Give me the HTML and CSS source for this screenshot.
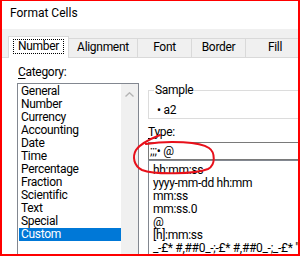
FILE: index.html
```html
<!DOCTYPE html>
<html lang="en">
<head>
  <meta charset="UTF-8" />
  <title>Format Cells</title>
  <link rel="stylesheet" href="styles.css">
</head>
<body>
  <div class="window">
    <div class="titlebar">Format Cells</div>

    <div class="tabs">
      <div class="tab active"><span class="focus">Number</span></div>
      <div class="tab tab-align">Alignment</div>
      <div class="tab tab-font">Font</div>
      <div class="tab tab-border">Border</div>
      <div class="tab tab-fill">Fill</div>
    </div>

    <div class="page">
      <div class="left">
        <div class="label"><u>C</u>ategory:</div>
        <div class="listbox">
          <ul class="items">
            <li>General</li>
            <li>Number</li>
            <li>Currency</li>
            <li>Accounting</li>
            <li>Date</li>
            <li>Time</li>
            <li>Percentage</li>
            <li>Fraction</li>
            <li>Scientific</li>
            <li>Text</li>
            <li>Special</li>
            <li class="selected">Custom</li>
          </ul>
          <div class="scrollbar">
            <svg width="9" height="5" viewBox="0 0 9 5">
              <polyline points="0.5,4.5 4.5,0.8 8.5,4.5" fill="none" stroke="#b4b4b4" stroke-width="1.4"/>
            </svg>
          </div>
        </div>
      </div>

      <div class="right">
        <fieldset class="sample">
          <legend>Sample</legend>
          <div class="sample-value">• a2</div>
        </fieldset>
        <div class="label type-label"><u>T</u>ype:</div>
        <div class="type-input">;;;• @</div>
        <ul class="type-list">
          <li>hh:mm:ss</li>
          <li>yyyy-mm-dd hh:mm</li>
          <li>mm:ss</li>
          <li>mm:ss.0</li>
          <li>@</li>
          <li>[h]:mm:ss</li>
          <li>_-£* #,##0_-;-£* #,##0_-;_-£* "-"_-;_-@_-</li>
        </ul>
      </div>
    </div>

    <svg class="annotation" width="300" height="256" viewBox="0 0 300 256">
      <path d="M160,135 C150,139 140,144 136,150 C132,157 134,166 142,170 C155,175 195,174 208,169 C216,165 215,152 209,148 C200,142 170,140 146,144"
            fill="none" stroke="#e8101a" stroke-width="2" stroke-linecap="round"/>
    </svg>
  </div>
</body>
</html>
```

FILE: styles.css
```css
body {
  margin: 0;
  font-family: Roboto, "Noto Sans", sans-serif;
  font-size: 12px;
  letter-spacing: -0.3px;
  color: #000;
  background-color: #ffffff;
}

.window {
  position: relative;
  width: 300px;
  height: 256px;
  box-sizing: border-box;
  border-style: solid;
  border-color: #ff0000;
  border-width: 1px 2px 2px 2px;
  background-color: #f0f0f0;
  overflow: hidden;
}

.titlebar {
  height: 28px;
  box-sizing: border-box;
  padding-left: 8px;
  line-height: 25px;
  letter-spacing: 0;
  background-color: #ffffff;
}

.tabs {
  display: flex;
  align-items: flex-end;
  height: 28px;
  box-sizing: border-box;
  padding-left: 6px;
}
.tab {
  flex: none;
  height: 19px;
  box-sizing: border-box;
  padding-top: 1px;
  margin-left: -1px;
  border: 1px solid #d9d9d9;
  border-bottom: none;
  background-color: #f0f0f0;
  text-align: center;
  line-height: 15px;
  white-space: nowrap;
}
.tab.active {
  position: relative;
  z-index: 1;
  width: 61px;
  height: 22px;
  margin-left: 0;
  margin-bottom: -1px;
  padding-top: 2px;
  background-color: #ffffff;
}
.tab-align { width: 70px; }
.tab-font { width: 55px; }
.tab-border { width: 55px; }
.tab-fill { width: 60px; }

.focus {
  display: inline-block;
  padding: 0 4px;
  border: 1px dotted #000;
  line-height: 13px;
}

.page {
  display: grid;
  grid-template-columns: 122px 170px;
  column-gap: 9px;
  align-items: start;
  height: 220px;
  padding: 7px 0 0 15px;
  border-top: 1px solid #d9d9d9;
  background-color: #ffffff;
}

.label {
  line-height: 15px;
  margin-left: 1px;
}
.label u {
  text-decoration-thickness: 1px;
  text-underline-offset: 2px;
}

.listbox {
  display: flex;
  height: 180px;
  margin-top: 3px;
  border: 1px solid #828790;
}
.items {
  width: 103px;
  box-sizing: border-box;
  margin: 0;
  padding: 1px 0 0 1px;
  list-style: none;
}
.items li {
  height: 13px;
  padding-left: 2px;
  line-height: 13px;
  white-space: nowrap;
}
.items li.selected {
  background-color: #0078d7;
  color: #ffffff;
}
.scrollbar {
  width: 17px;
  background-color: #f0f0f0;
  text-align: center;
}
.scrollbar svg {
  display: block;
  margin: 8px auto 0 auto;
}

.sample {
  min-width: 0;
  margin: 18px 0 0 0;
  padding: 0 0 0 5px;
  border: 1px solid #dcdcdc;
}
.sample legend {
  padding: 0 1px;
  line-height: 15px;
}
.sample-value {
  margin-left: 3px;
  padding-top: 5px;
  line-height: 15px;
}

.type-label {
  margin: 6px 0 0 0;
}

.type-input {
  margin-top: 2px;
  padding: 0 1px;
  border: 1px solid #7a7a7a;
  line-height: 16px;
  white-space: nowrap;
}

.type-list {
  height: 120px;
  margin: 0;
  padding: 3px 0 0 4px;
  border: 1px solid #828790;
  list-style: none;
}
.type-list li {
  height: 13px;
  line-height: 13px;
  white-space: nowrap;
}

.annotation {
  position: absolute;
  left: -2px;
  top: -1px;
  pointer-events: none;
}
```
